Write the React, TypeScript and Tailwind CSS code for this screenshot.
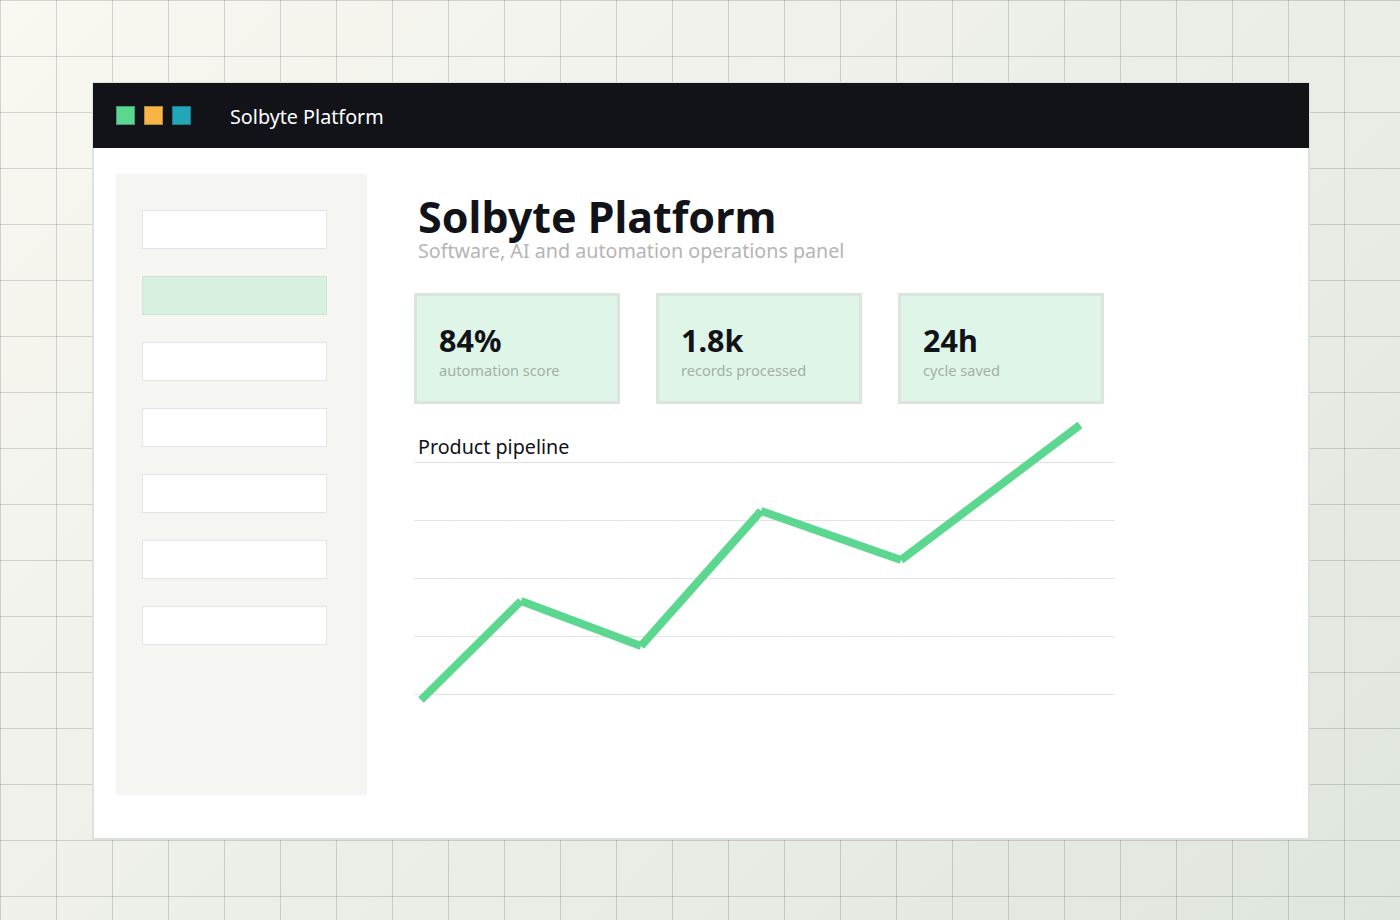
const NAV = [false, true, false, false, false, false, false];

const STATS = [
  { value: "84%", label: "automation score" },
  { value: "1.8k", label: "records processed" },
  { value: "24h", label: "cycle saved" },
];

// chart segments are drawn apart so the joints keep their notches
const POINTS = [
  [7, 268],
  [107, 169],
  [227, 214],
  [347, 79],
  [487, 128],
  [666, -7],
];

export default function App() {
  return (
    <div className="h-[920px] overflow-hidden pl-[92px] pt-[82px] font-['Noto_Sans',sans-serif] bg-[linear-gradient(rgba(17,20,24,0.16)_1px,transparent_1px),linear-gradient(90deg,rgba(17,20,24,0.16)_1px,transparent_1px),linear-gradient(135deg,#f9f8f1,#dfe6de)] bg-[size:56px_56px,56px_56px,100%_100%]">
      <div className="h-[758px] w-[1218px] border-2 border-[#dde3dc] bg-white/[0.98]">
        <header className="-mx-px -mt-px flex h-[65px] items-center bg-[#111318] pl-[23px]">
          <span className="h-[19px] w-[19px] border border-[#3f9f72] bg-[#5bd78f]" />
          <span className="ml-[9px] h-[19px] w-[19px] border border-[#b08a3c] bg-[#f7b545]" />
          <span className="ml-[9px] h-[19px] w-[19px] border border-[#1a7a8c] bg-[#22a7b8]" />
          <span className="ml-[39px] mt-[3px] text-[19.75px] text-white">Solbyte Platform</span>
        </header>
        <div className="flex pl-[22px] pt-[26px]">
          <aside className="flex h-[621px] w-[251px] flex-col gap-[27px] bg-[#f5f6f1] pl-[26px] pt-[36px]">
            {NAV.map((active, i) => (
              <div
                key={i}
                className={
                  active
                    ? "h-[39px] w-[185px] border border-[#cfe3d4] bg-[#d8f0e0]"
                    : "h-[39px] w-[185px] border border-[#e3e5e0] bg-white"
                }
              />
            ))}
          </aside>
          <main className="ml-[47px] w-[701px]">
            <h1 className="mt-[15px] pl-[4px] text-[43px] font-bold leading-[56px] text-[#111318]">Solbyte Platform</h1>
            <p className="-mt-[9px] pl-[4px] text-[19.7px] leading-[30px] text-[#b5b5b5]">
              Software, AI and automation operations panel
            </p>
            <div className="mt-[27px] flex gap-[36px]">
              {STATS.map((s) => (
                <div key={s.label} className="h-[111px] w-[206px] border-[3px] border-[#dbe5dd] bg-[#dff5e8] pl-[22px] pt-[26px]">
                  <div className="text-[30.5px] font-bold leading-[37px] text-[#111318]">{s.value}</div>
                  <div className="text-[14.6px] leading-[22px] text-[#a3b0a6]">{s.label}</div>
                </div>
              ))}
            </div>
            <div className="relative mt-[28px]">
              <div className="pl-[4px] text-[19.7px] leading-[30px] text-[#111318]">Product pipeline</div>
              {[0, 1, 2, 3].map((i) => (
                <div key={i} className="h-[58px] border-t border-[#e3e3e3]" />
              ))}
              <div className="border-t border-[#e3e3e3]" />
              <svg className="absolute left-0 top-0 overflow-visible" width="701" height="300" fill="none">
                {POINTS.slice(1).map(([x, y], i) => (
                  <line key={i} x1={POINTS[i][0]} y1={POINTS[i][1]} x2={x} y2={y} stroke="#5bd78f" strokeWidth="8" />
                ))}
              </svg>
            </div>
          </main>
        </div>
      </div>
    </div>
  );
}
